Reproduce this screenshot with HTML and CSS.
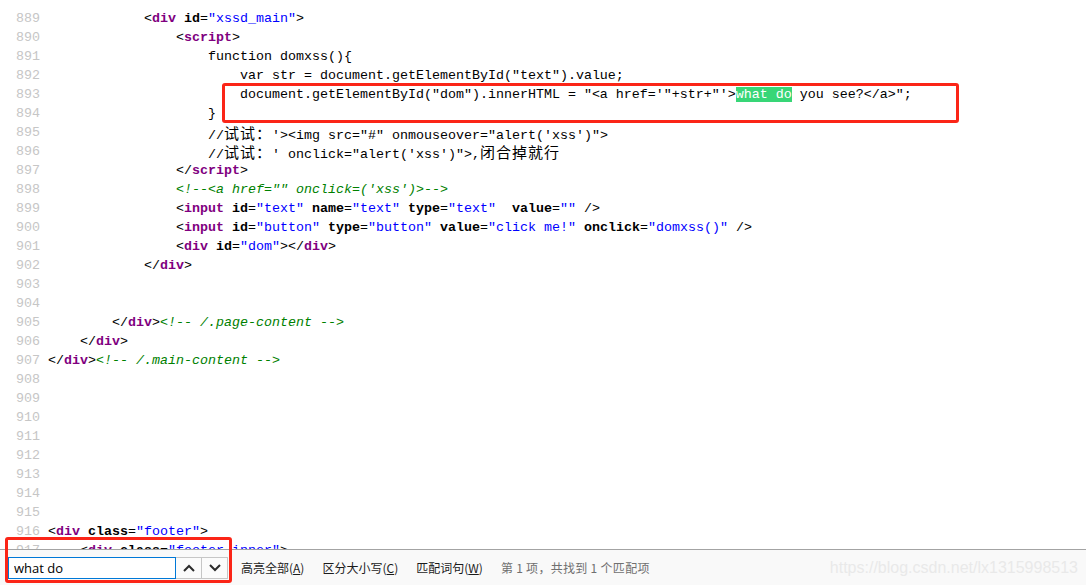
FILE: index.html
```html
<!DOCTYPE html>
<html lang="zh-CN">
<head>
  <meta charset="UTF-8">
  <title>view-source</title>
  <link rel="stylesheet" href="styles.css">
</head>
<body>
  <div class="window">
    <!-- source listing -->
    <div class="source">
      <div class="lines">
        <div class="row"><span class="ln">888</span><span class="code"></span></div>
        <div class="row"><span class="ln">889</span><span class="code">            &lt;<b class="tag">div</b> <b class="attr">id</b>=<span class="val">"xssd_main"</span>&gt;</span></div>
        <div class="row"><span class="ln">890</span><span class="code">                &lt;<b class="tag">script</b>&gt;</span></div>
        <div class="row"><span class="ln">891</span><span class="code">                    function domxss(){</span></div>
        <div class="row"><span class="ln">892</span><span class="code">                        var str = document.getElementById("text").value;</span></div>
        <div class="row"><span class="ln">893</span><span class="code">                        document.getElementById("dom").innerHTML = "&lt;a href='"+str+"'&gt;<span class="hit">what do</span> you see?&lt;/a&gt;";</span></div>
        <div class="row"><span class="ln">894</span><span class="code">                    }</span></div>
        <div class="row"><span class="ln">895</span><span class="code">                    //<span class="cjk">试试：</span>'&gt;&lt;img src="#" onmouseover="alert('xss')"&gt;</span></div>
        <div class="row"><span class="ln">896</span><span class="code">                    //<span class="cjk">试试：</span>' onclick="alert('xss')"&gt;,<span class="cjk">闭合掉就行</span></span></div>
        <div class="row"><span class="ln">897</span><span class="code">                &lt;/<b class="tag">script</b>&gt;</span></div>
        <div class="row"><span class="ln">898</span><span class="code">                <i class="comment">&lt;!--&lt;a href="" onclick=('xss')&gt;--&gt;</i></span></div>
        <div class="row"><span class="ln">899</span><span class="code">                &lt;<b class="tag">input</b> <b class="attr">id</b>=<span class="val">"text"</span> <b class="attr">name</b>=<span class="val">"text"</span> <b class="attr">type</b>=<span class="val">"text"</span>  <b class="attr">value</b>=<span class="val">""</span> /&gt;</span></div>
        <div class="row"><span class="ln">900</span><span class="code">                &lt;<b class="tag">input</b> <b class="attr">id</b>=<span class="val">"button"</span> <b class="attr">type</b>=<span class="val">"button"</span> <b class="attr">value</b>=<span class="val">"click me!"</span> <b class="attr">onclick</b>=<span class="val">"domxss()"</span> /&gt;</span></div>
        <div class="row"><span class="ln">901</span><span class="code">                &lt;<b class="tag">div</b> <b class="attr">id</b>=<span class="val">"dom"</span>&gt;&lt;/<b class="tag">div</b>&gt;</span></div>
        <div class="row"><span class="ln">902</span><span class="code">            &lt;/<b class="tag">div</b>&gt;</span></div>
        <div class="row"><span class="ln">903</span><span class="code"></span></div>
        <div class="row"><span class="ln">904</span><span class="code"></span></div>
        <div class="row"><span class="ln">905</span><span class="code">        &lt;/<b class="tag">div</b>&gt;<i class="comment">&lt;!-- /.page-content --&gt;</i></span></div>
        <div class="row"><span class="ln">906</span><span class="code">    &lt;/<b class="tag">div</b>&gt;</span></div>
        <div class="row"><span class="ln">907</span><span class="code">&lt;/<b class="tag">div</b>&gt;<i class="comment">&lt;!-- /.main-content --&gt;</i></span></div>
        <div class="row"><span class="ln">908</span><span class="code"></span></div>
        <div class="row"><span class="ln">909</span><span class="code"></span></div>
        <div class="row"><span class="ln">910</span><span class="code"></span></div>
        <div class="row"><span class="ln">911</span><span class="code"></span></div>
        <div class="row"><span class="ln">912</span><span class="code"></span></div>
        <div class="row"><span class="ln">913</span><span class="code"></span></div>
        <div class="row"><span class="ln">914</span><span class="code"></span></div>
        <div class="row"><span class="ln">915</span><span class="code"></span></div>
        <div class="row"><span class="ln">916</span><span class="code">&lt;<b class="tag">div</b> <b class="attr">class</b>=<span class="val">"footer"</span>&gt;</span></div>
        <div class="row"><span class="ln">917</span><span class="code">    &lt;<b class="tag">div</b> <b class="attr">class</b>=<span class="val">"footer-inner"</span>&gt;</span></div>
      </div>
    </div>

    <!-- find bar -->
    <div class="findbar">
      <div class="find-field">
        <input type="text" class="find-input" value="what do">
        <button class="find-btn" type="button" aria-label="上一个">
          <svg width="12" height="8" viewBox="0 0 12 8"><polyline points="1,7 6,2 11,7" fill="none" stroke="#2b2b2b" stroke-width="2"/></svg>
        </button>
        <button class="find-btn" type="button" aria-label="下一个">
          <svg width="12" height="8" viewBox="0 0 12 8"><polyline points="1,1 6,6 11,1" fill="none" stroke="#2b2b2b" stroke-width="2"/></svg>
        </button>
      </div>
      <span class="opt">高亮全部(<u>A</u>)</span>
      <span class="opt">区分大小写(<u>C</u>)</span>
      <span class="opt">匹配词句(<u>W</u>)</span>
      <span class="status">第 1 项，共找到 1 个匹配项</span>
      <span class="watermark">https://blog.csdn.net/lx1315998513</span>
    </div>

    <!-- red annotation boxes -->
    <div class="mark mark-line"></div>
    <div class="mark mark-find"></div>
  </div>
</body>
</html>
```

FILE: styles.css
```css
body {
  margin: 0;
  padding: 0;
  background: #ffffff;
  overflow: hidden;
}

.window {
  position: relative;
  width: 1086px;
  height: 585px;
  display: flex;
  flex-direction: column;
}

.source {
  height: 549px;
  overflow: hidden;
}

.lines {
  margin-top: -8px;
}

.row {
  display: flex;
  height: 19px;
  line-height: 19px;
  font-family: "Liberation Mono", monospace;
  font-size: 13.33px;
  color: #000000;
  white-space: pre;
}

.row:first-child {
  height: 17px;
  line-height: 3px;
}

.ln {
  width: 40px;
  padding-right: 8px;
  text-align: right;
  color: #c6c6c6;
  flex-shrink: 0;
}

.code b {
  font-weight: bold;
}

.tag {
  color: #800080;
}

.attr {
  color: #000000;
}

.val {
  color: #0000ff;
}

.comment {
  color: #008000;
  font-style: italic;
}

.hit {
  background: #38d677;
  color: #ffffff;
}

.cjk {
  font-family: "Noto Sans CJK SC", sans-serif;
  font-size: 15px;
  letter-spacing: 1px;
}

/* find bar */
.findbar {
  flex: 1;
  display: flex;
  align-items: center;
  border-top: 1px solid #a3a3a3;
  background: #f9f9f9;
  padding-left: 8px;
  font-family: "Noto Sans CJK SC", sans-serif;
  font-size: 12px;
  color: #1b1b1b;
}

.find-field {
  display: flex;
  height: 22px;
  margin-right: 13px;
}

.find-input {
  box-sizing: border-box;
  width: 168px;
  height: 22px;
  margin: 0;
  padding: 0 5px;
  border: 1px solid #0078d7;
  font-family: "Open Sans", "Noto Sans", sans-serif;
  font-size: 13px;
  color: #000000;
  background: #ffffff;
  outline: none;
}

.find-btn {
  box-sizing: border-box;
  width: 26px;
  height: 22px;
  margin: 0;
  padding: 0;
  border: 1px solid #c6c6c6;
  border-left: none;
  background: #fbfbfb;
  display: flex;
  align-items: center;
  justify-content: center;
}

.opt {
  margin-right: 18px;
}

.opt u {
  text-decoration: underline;
}

.status {
  color: #707070;
  letter-spacing: 0.3px;
}

.watermark {
  margin-left: auto;
  margin-right: 8px;
  font-family: "Liberation Sans", sans-serif;
  font-size: 16px;
  color: #e9e9e9;
}

/* annotations drawn over the screenshot */
.mark {
  position: absolute;
  border: 3px solid #fb2517;
  border-radius: 3px;
}

.mark-line {
  left: 222px;
  top: 83px;
  width: 731px;
  height: 34px;
}

.mark-find {
  left: 5px;
  top: 537px;
  width: 221px;
  height: 40px;
}
```
